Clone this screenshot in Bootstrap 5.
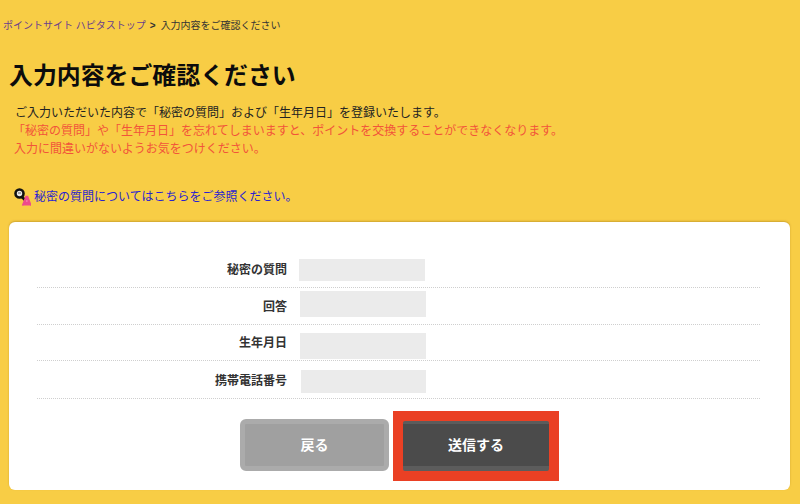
<!DOCTYPE html>
<html lang="ja">
<head>
<meta charset="utf-8">
<title>入力内容をご確認ください</title>
<link href="https://cdn.jsdelivr.net/npm/bootstrap@5.3.0/dist/css/bootstrap.min.css" rel="stylesheet">
<style>
html,body{height:504px;overflow:hidden}
body{background:#f8cd45;color:#222;font-family:"Liberation Sans","Noto Sans CJK JP",sans-serif;font-size:12px;line-height:18px}
.crumbs{font-size:10px;line-height:14px;padding:19px 0 0 3px;color:#333}
.crumbs a{color:#6a3f8c;text-decoration:none}
.crumbs b{font-weight:700;margin:0 5px 0 4px}
.pagetitle{font-size:23.9px;line-height:32px;font-weight:700;color:#0c0c0c;margin:27px 0 0 9px}
.intro{margin:12px 0 0 15px}
.intro p{margin:0}
.warn{color:#f2543a}
.warn-first{margin-left:-2px!important}
.warn-last{margin-left:-1px!important}
.guide{margin:30px 0 0 14px;height:18px}
.guide a{color:#2a1fd0;text-decoration:none}
.guide svg{display:block;flex:none;margin-right:3px}
.panel{margin:16px 10px 0 9px;height:268px;border:0;border-radius:6px;box-shadow:0 -1px 2px rgba(170,130,30,.55);padding:37px 30px 0 28px}
.frow{border-bottom:1px dotted #cfcfcf;display:flex;align-items:flex-start}
.flabel{width:250px;text-align:right;font-weight:700;color:#333;flex:none}
.fval{background:#ebebeb;width:126px;flex:none}
.r1{height:29px}.r1 .flabel{margin-top:2px}.r1 .fval{height:22px;margin-left:12px;margin-top:0}
.r2{height:37px;padding-top:3px}.r2 .flabel{margin-top:7px}.r2 .fval{height:26px;margin-left:13px}
.r3{height:36px;padding-top:8px}.r3 .flabel{margin-top:1px}.r3 .fval{height:26px;margin-left:13px}
.r4{height:38px;padding-top:9px}.r4 .flabel{margin-top:2px}.r4 .fval{height:23px;margin-left:14px;width:125px}
.actions{margin-top:12px;gap:4px;margin-left:203px}
.backbtn,.sendbtn{color:#fff;font-weight:700;font-size:14px;line-height:18px;display:flex;align-items:center;justify-content:center}
.backbtn{width:149px;height:52px;margin-top:8px;background:#a0a0a0;border:5px solid #ababab;border-radius:6px;padding:0}
.backbtn:hover{background:#a0a0a0;color:#fff}
.sendframe{background:#ea4024;padding:10px;width:166px;height:70px;display:flex}
.sendbtn{width:146px;height:50px;background:#4b4b4b;border:0;border-top:3px solid #5c5c5c;border-bottom:5px solid #5c5c5c;border-radius:2px;padding:0}
.sendbtn:hover{background:#4b4b4b;color:#fff}
</style>
</head>
<body>
<nav class="crumbs"><a href="#">ポイントサイト ハピタストップ</a><b>&gt;</b>入力内容をご確認ください</nav>
<h1 class="pagetitle">入力内容をご確認ください</h1>
<div class="intro">
<p>ご入力いただいた内容で「秘密の質問」および「生年月日」を登録いたします。</p>
<p class="warn warn-first">「秘密の質問」や「生年月日」を忘れてしまいますと、ポイントを交換することができなくなります。</p>
<p class="warn warn-last">入力に間違いがないようお気をつけください。</p>
</div>
<div class="guide d-flex align-items-center">
<svg width="17" height="18" viewBox="0 0 17 18" aria-hidden="true">
<circle cx="5.5" cy="5.5" r="4" fill="#e8e8e8" stroke="#111" stroke-width="2.6"/>
<path d="M4 5h3" stroke="#777" stroke-width="1.2"/>
<path d="M8 9l3 3" stroke="#111" stroke-width="2.6"/>
<path d="M8.5 17.5L12 8.5h1.6L17 17.5" fill="#ee4c8c" stroke="#ee4c8c" stroke-width="1.4"/>
<path d="M12.8 12.5v1" stroke="#f9b0c8" stroke-width="1.4"/>
</svg>
<a href="#">秘密の質問についてはこちらをご参照ください。</a>
</div>
<div class="card panel">
<div class="frow r1"><div class="flabel">秘密の質問</div><div class="fval"></div></div>
<div class="frow r2"><div class="flabel">回答</div><div class="fval"></div></div>
<div class="frow r3"><div class="flabel">生年月日</div><div class="fval"></div></div>
<div class="frow r4"><div class="flabel">携帯電話番号</div><div class="fval"></div></div>
<div class="actions d-flex align-items-start">
<button type="button" class="btn backbtn">戻る</button>
<div class="sendframe"><button type="button" class="btn sendbtn">送信する</button></div>
</div>
</div>
</body>
</html>
